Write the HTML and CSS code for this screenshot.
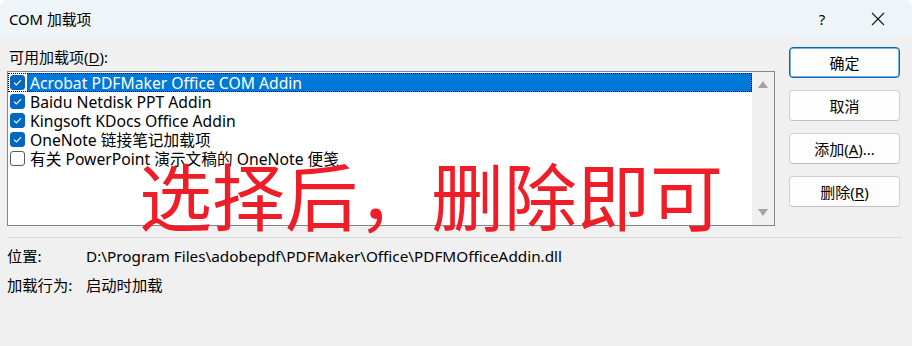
FILE: index.html
```html
<!DOCTYPE html>
<html lang="zh-CN">
<head>
<meta charset="utf-8">
<title>COM 加载项</title>
<link rel="stylesheet" href="styles.css">
</head>
<body>
<div class="window">
  <div class="titlebar">
    <span class="title">COM 加载项</span>
    <span class="help">?</span>
    <span class="close">
      <svg width="14" height="14" viewBox="0 0 14 14"><path d="M1 1 L13 13 M13 1 L1 13" stroke="#1a1a1a" stroke-width="1.1" fill="none"/></svg>
    </span>
  </div>
  <div class="content">
    <div class="main">
      <div class="label">可用加载项(<u>D</u>):</div>
      <div class="listbox">
        <div class="rows">
          <div class="row selected">
            <span class="cb checked"><svg width="15" height="15" viewBox="0 0 15 15"><path d="M4 7.6 L6.4 10 L11 5.2" stroke="#fff" stroke-width="1.1" fill="none"/></svg></span>
            <span class="text">Acrobat PDFMaker Office COM Addin</span>
          </div>
          <div class="row">
            <span class="cb checked"><svg width="15" height="15" viewBox="0 0 15 15"><path d="M4 7.6 L6.4 10 L11 5.2" stroke="#fff" stroke-width="1.1" fill="none"/></svg></span>
            <span class="text">Baidu Netdisk PPT Addin</span>
          </div>
          <div class="row">
            <span class="cb checked"><svg width="15" height="15" viewBox="0 0 15 15"><path d="M4 7.6 L6.4 10 L11 5.2" stroke="#fff" stroke-width="1.1" fill="none"/></svg></span>
            <span class="text">Kingsoft KDocs Office Addin</span>
          </div>
          <div class="row">
            <span class="cb checked"><svg width="15" height="15" viewBox="0 0 15 15"><path d="M4 7.6 L6.4 10 L11 5.2" stroke="#fff" stroke-width="1.1" fill="none"/></svg></span>
            <span class="text">OneNote 链接笔记加载项</span>
          </div>
          <div class="row">
            <span class="cb"></span>
            <span class="text">有关 PowerPoint 演示文稿的 OneNote 便笺</span>
          </div>
        </div>
        <div class="scrollbar">
          <svg width="10" height="7" viewBox="0 0 10 7"><path d="M0 7 L5 0 L10 7 Z" fill="#a3a3a3"/></svg>
          <svg width="10" height="7" viewBox="0 0 10 7"><path d="M0 0 L10 0 L5 7 Z" fill="#a3a3a3"/></svg>
        </div>
      </div>
    </div>
    <div class="buttons">
      <button class="btn default">确定</button>
      <button class="btn">取消</button>
      <button class="btn">添加(<u>A</u>)...</button>
      <button class="btn">删除(<u>R</u>)</button>
    </div>
  </div>
  <div class="separator"></div>
  <div class="info">
    <div class="info-row"><span class="key">位置:</span><span class="val">D:\Program Files\adobepdf\PDFMaker\Office\PDFMOfficeAddin.dll</span></div>
    <div class="info-row"><span class="key">加载行为:</span><span class="val">启动时加载</span></div>
  </div>
  <div class="annotation">选择后，删除即可</div>
</div>
</body>
</html>
```

FILE: styles.css
```css
html, body {
  margin: 0;
  padding: 0;
  background: #ffffff;
}
body {
  width: 912px;
  height: 346px;
  overflow: hidden;
  font-family: "Noto Sans", "Noto Sans CJK SC", sans-serif;
  font-size: 15px;
  color: #000;
}
.window {
  position: relative;
  width: 912px;
  height: 346px;
  background: #f0f0f0;
  border-radius: 8px 8px 0 0;
  overflow: hidden;
}
.titlebar {
  height: 37px;
  background: #eef4f7;
  display: flex;
  align-items: center;
  padding-left: 9px;
  box-sizing: border-box;
}
.title {
  font-size: 14.8px;
  flex: 1;
  padding-bottom: 1px;
}
.help {
  font-size: 15px;
  width: 56px;
  text-align: center;
  margin-right: 6px;
}
.close {
  width: 44px;
  display: flex;
  justify-content: center;
  margin-right: 12px;
}
.content {
  display: flex;
  padding: 10px 0 0 7px;
}
.main {
  width: 768px;
}
.label {
  height: 20px;
  line-height: 20px;
  margin-bottom: 4px;
  padding-left: 2px;
  font-size: 15px;
}
.label u, .btn u { text-underline-offset: 2px; }
.listbox {
  height: 155px;
  box-sizing: border-box;
  border: 1px solid #82878e;
  background: #fff;
  display: flex;
}
.rows {
  flex: 1;
  padding-top: 1px;
}
.row {
  height: 19px;
  line-height: 19px;
  display: flex;
  align-items: center;
  box-sizing: border-box;
  font-size: 15.7px;
}
.row.selected {
  outline: 1px dotted #000;
  outline-offset: -1px;
  background: linear-gradient(to right, #fff 19px, #0078d7 19px);
  color: #fff;
}
.cb {
  width: 15px;
  height: 15px;
  margin: 0 4px 0 2px;
  box-sizing: border-box;
  border: 1px solid #5c5c5c;
  border-radius: 3px;
  background: #fff;
  flex: none;
  display: flex;
}
.cb.checked {
  background: #0067c0;
  border-color: #0067c0;
}
.cb svg { margin: -1px; }
.text {
  white-space: nowrap;
  padding-left: 1px;
  padding-top: 1px;
  line-height: 18px;
}
.scrollbar {
  width: 22px;
  background: #f0f0f0;
  display: flex;
  flex-direction: column;
  justify-content: space-between;
  align-items: center;
  padding: 9px 0 9px;
}
.buttons {
  display: flex;
  flex-direction: column;
  gap: 12px;
  margin-left: 14px;
}
.btn {
  width: 111px;
  height: 31px;
  box-sizing: border-box;
  border: 1px solid #d0d0d0;
  border-bottom-color: #c0c0c0;
  border-radius: 4px;
  background: #fdfdfd;
  font-family: "Noto Sans", "Noto Sans CJK SC", sans-serif;
  font-size: 15px;
  color: #000;
  padding: 0;
}
.btn.default {
  border: 1px solid #0067c0;
  box-shadow: inset 0 0 0 0.5px #0067c0;
}
.separator {
  height: 1px;
  background: #d9d9d9;
  margin: 11px 10px 0 7px;
}
.info {
  padding: 8px 0 0 7px;
  font-size: 15.3px;
}
.info-row {
  display: flex;
  height: 20px;
  line-height: 20px;
  margin-bottom: 9px;
}
.key {
  width: 79px;
}
.val {
  white-space: nowrap;
}
.annotation {
  position: absolute;
  left: 139px;
  top: 144px;
  font-family: "Noto Sans CJK SC", sans-serif;
  font-size: 73px;
  line-height: 98px;
  color: #ee1d27;
  white-space: nowrap;
}
```
